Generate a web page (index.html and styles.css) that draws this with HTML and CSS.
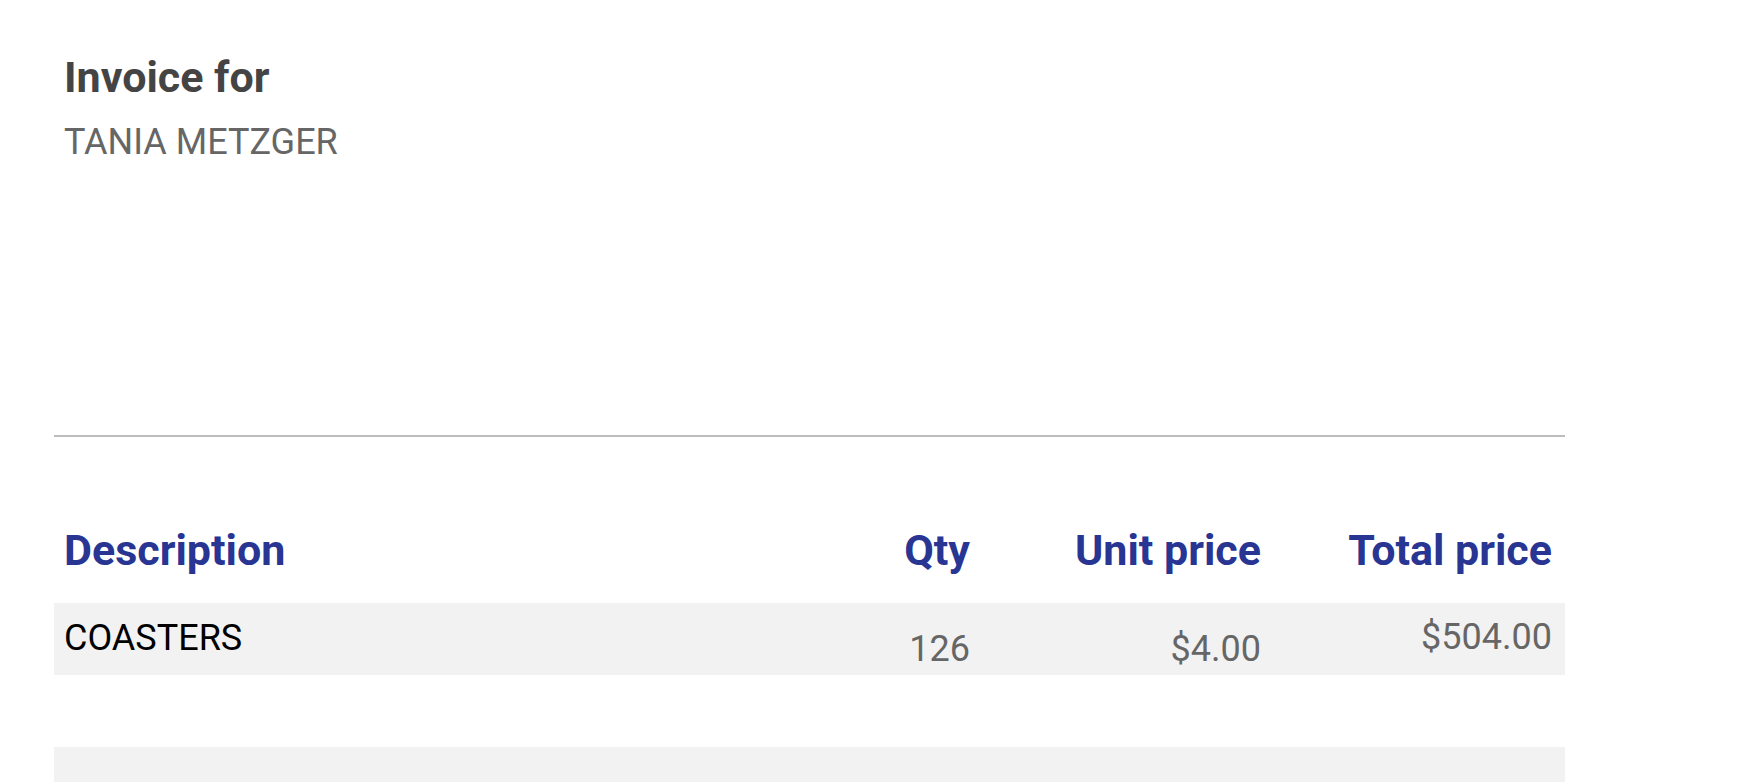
FILE: index.html
```html
<!DOCTYPE html>
<html lang="en">
<head>
  <meta charset="UTF-8">
  <meta name="viewport" content="width=device-width, initial-scale=1.0">
  <title>Invoice</title>
  <link rel="stylesheet" href="styles.css">
</head>
<body>
  <div class="invoice">
    <section class="bill-to">
      <h2 class="bill-title">Invoice for</h2>
      <p class="bill-name">TANIA METZGER</p>
    </section>
    <hr class="divider">
    <div class="items">
      <div class="row head">
        <div class="cell">Description</div>
        <div class="cell num">Qty</div>
        <div class="cell num">Unit price</div>
        <div class="cell num">Total price</div>
      </div>
      <div class="row item">
        <div class="cell desc">COASTERS</div>
        <div class="cell num low">126</div>
        <div class="cell num low">$4.00</div>
        <div class="cell num">$504.00</div>
      </div>
      <div class="row item"></div>
      <div class="row item"></div>
      <div class="row item"></div>
    </div>
  </div>
</body>
</html>
```

FILE: styles.css
```css
:root {
  --ink: #444;
  --muted: #666;
  --accent: #283593;
  --stripe: #f2f2f2;
  --rule: #bdbdbd;
}
body { margin: 0; background: #fff; font-family: Roboto, "Liberation Sans", sans-serif; }
.invoice { width: 1511px; margin-left: 54px; }
.bill-to { padding: 52px 0 0 10px; }
.bill-title { margin: 0; font-size: 43px; line-height: 1.2; font-weight: 700; color: var(--ink); }
.bill-name { margin: 17px 0 0; font-size: 36px; line-height: 1.2; color: var(--muted); }
.divider { border: 0; border-top: 2px solid var(--rule); margin: 271px 0 0; }
.row { display: grid; grid-template-columns: 1fr 160px 291px 291px; align-items: start; }
.cell { padding: 0 13px 0 10px; }
.num { text-align: right; }
.head { padding: 88px 0 27px; }
.head .cell { font-size: 43px; line-height: 1.2; font-weight: 700; color: var(--accent); }
.item { height: 72px; }
.item:nth-child(even) { background: var(--stripe); }
.item .cell { font-size: 36px; line-height: 1.2; color: var(--muted); padding-top: 13px; }
.item .desc { color: #000; padding-top: 14px; }
.item .low { padding-top: 25px; }
```
